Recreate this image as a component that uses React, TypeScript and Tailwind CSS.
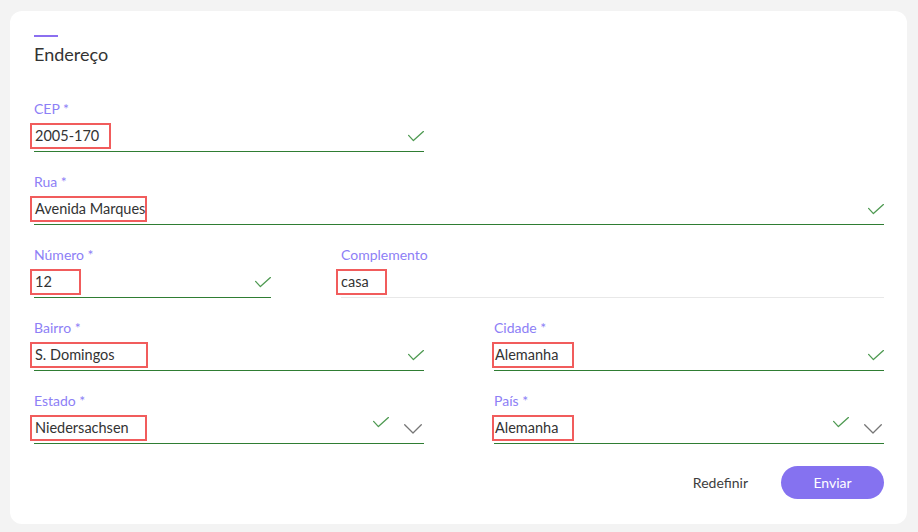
import React from "react";

const Check = () => (
  <svg width="16" height="11" viewBox="0 0 16 11" fill="none" className="shrink-0">
    <polyline points="0.6,4.4 5.4,9.6 15.4,0.6" stroke="#4f9a52" strokeWidth="1.3" strokeLinejoin="round" strokeLinecap="round" />
  </svg>
);

const Chevron = () => (
  <svg width="18" height="10" viewBox="0 0 18 10" fill="none" className="shrink-0">
    <polyline points="0.7,0.7 9,9 17.3,0.7" stroke="#767676" strokeWidth="1.3" strokeLinejoin="round" strokeLinecap="round" />
  </svg>
);

type FieldProps = {
  label: string;
  value: string;
  boxClass: string;
  valid?: boolean;
  select?: boolean;
  className?: string;
};

function Field({ label, value, boxClass, valid = true, select = false, className = "" }: FieldProps) {
  return (
    <div className={"flex flex-col " + className}>
      <div className="text-[14px] leading-4 text-[#8d80f6]">{label}</div>
      <div
        className={
          "flex h-[35px] items-end pb-[2px] border-b " +
          (valid ? "border-[#2f7d33]" : "border-[#e8e8e8]")
        }
      >
        <div className={"flex h-[26px] shrink-0 items-center whitespace-nowrap border-2 border-[#f15c5c] pb-[1px] text-[14.5px] text-[#333]" + " " + boxClass}>
          {value}
        </div>
        {valid && !select && (
          <div className="ml-auto mb-[7px]">
            <Check />
          </div>
        )}
        {select && (
          <div className="ml-auto flex items-end gap-[15px] pr-[2px]">
            <div className="mb-[13px]">
              <Check />
            </div>
            <div className="mb-[7px]">
              <Chevron />
            </div>
          </div>
        )}
      </div>
    </div>
  );
}

export default function App() {
  return (
    <div
      className="h-[532px] w-[918px] bg-[#f3f3f3] pt-[11px] pl-[10px]"
      style={{ fontFamily: "Lato, 'Open Sans', sans-serif" }}
    >
      <div className="h-[513px] w-[897px] rounded-[12px] bg-white pl-6 pr-[23px] pt-6">
        <div className="h-[2px] w-6 bg-[#8b6ff0]" />
        <h2 className="mt-[5px] text-[18px] leading-6 text-[#333]">Endereço</h2>

        <div className="mt-[35px] flex flex-col gap-[22px]">
          <Field label="CEP *" value="2005-170" boxClass="-ml-[4px] pl-[3px] w-[81px]" className="w-[390px]" />
          <Field label="Rua *" value="Avenida Marques" boxClass="-ml-[4px] pl-[3px] w-[117px]" />
          <div className="flex gap-[70px]">
            <Field label="Número *" value="12" boxClass="-ml-[4px] pl-[3px] w-[51px]" className="w-[237px]" />
            <Field label="Complemento" value="casa" valid={false} boxClass="-ml-[5px] pl-[3px] w-[51px]" className="flex-1" />
          </div>
          <div className="flex gap-[70px]">
            <Field label="Bairro *" value="S. Domingos" boxClass="-ml-[4px] pl-[3px] w-[118px]" className="w-[390px]" />
            <Field label="Cidade *" value="Alemanha" boxClass="-ml-[2px] pl-[1px] w-[82px]" className="w-[390px]" />
          </div>
          <div className="flex gap-[70px]">
            <Field label="Estado *" value="Niedersachsen" select boxClass="-ml-[4px] pl-[3px] w-[117px]" className="w-[390px]" />
            <Field label="País *" value="Alemanha" select boxClass="-ml-[2px] pl-[1px] w-[82px]" className="w-[390px]" />
          </div>
        </div>

        <div className="mt-[22px] flex items-center justify-end gap-[33px]">
          <button className="text-[14px] text-[#3d3d3d]">Redefinir</button>
          <button className="h-[33px] w-[103px] rounded-full bg-[#8572f0] text-[14px] text-white">Enviar</button>
        </div>
      </div>
    </div>
  );
}
